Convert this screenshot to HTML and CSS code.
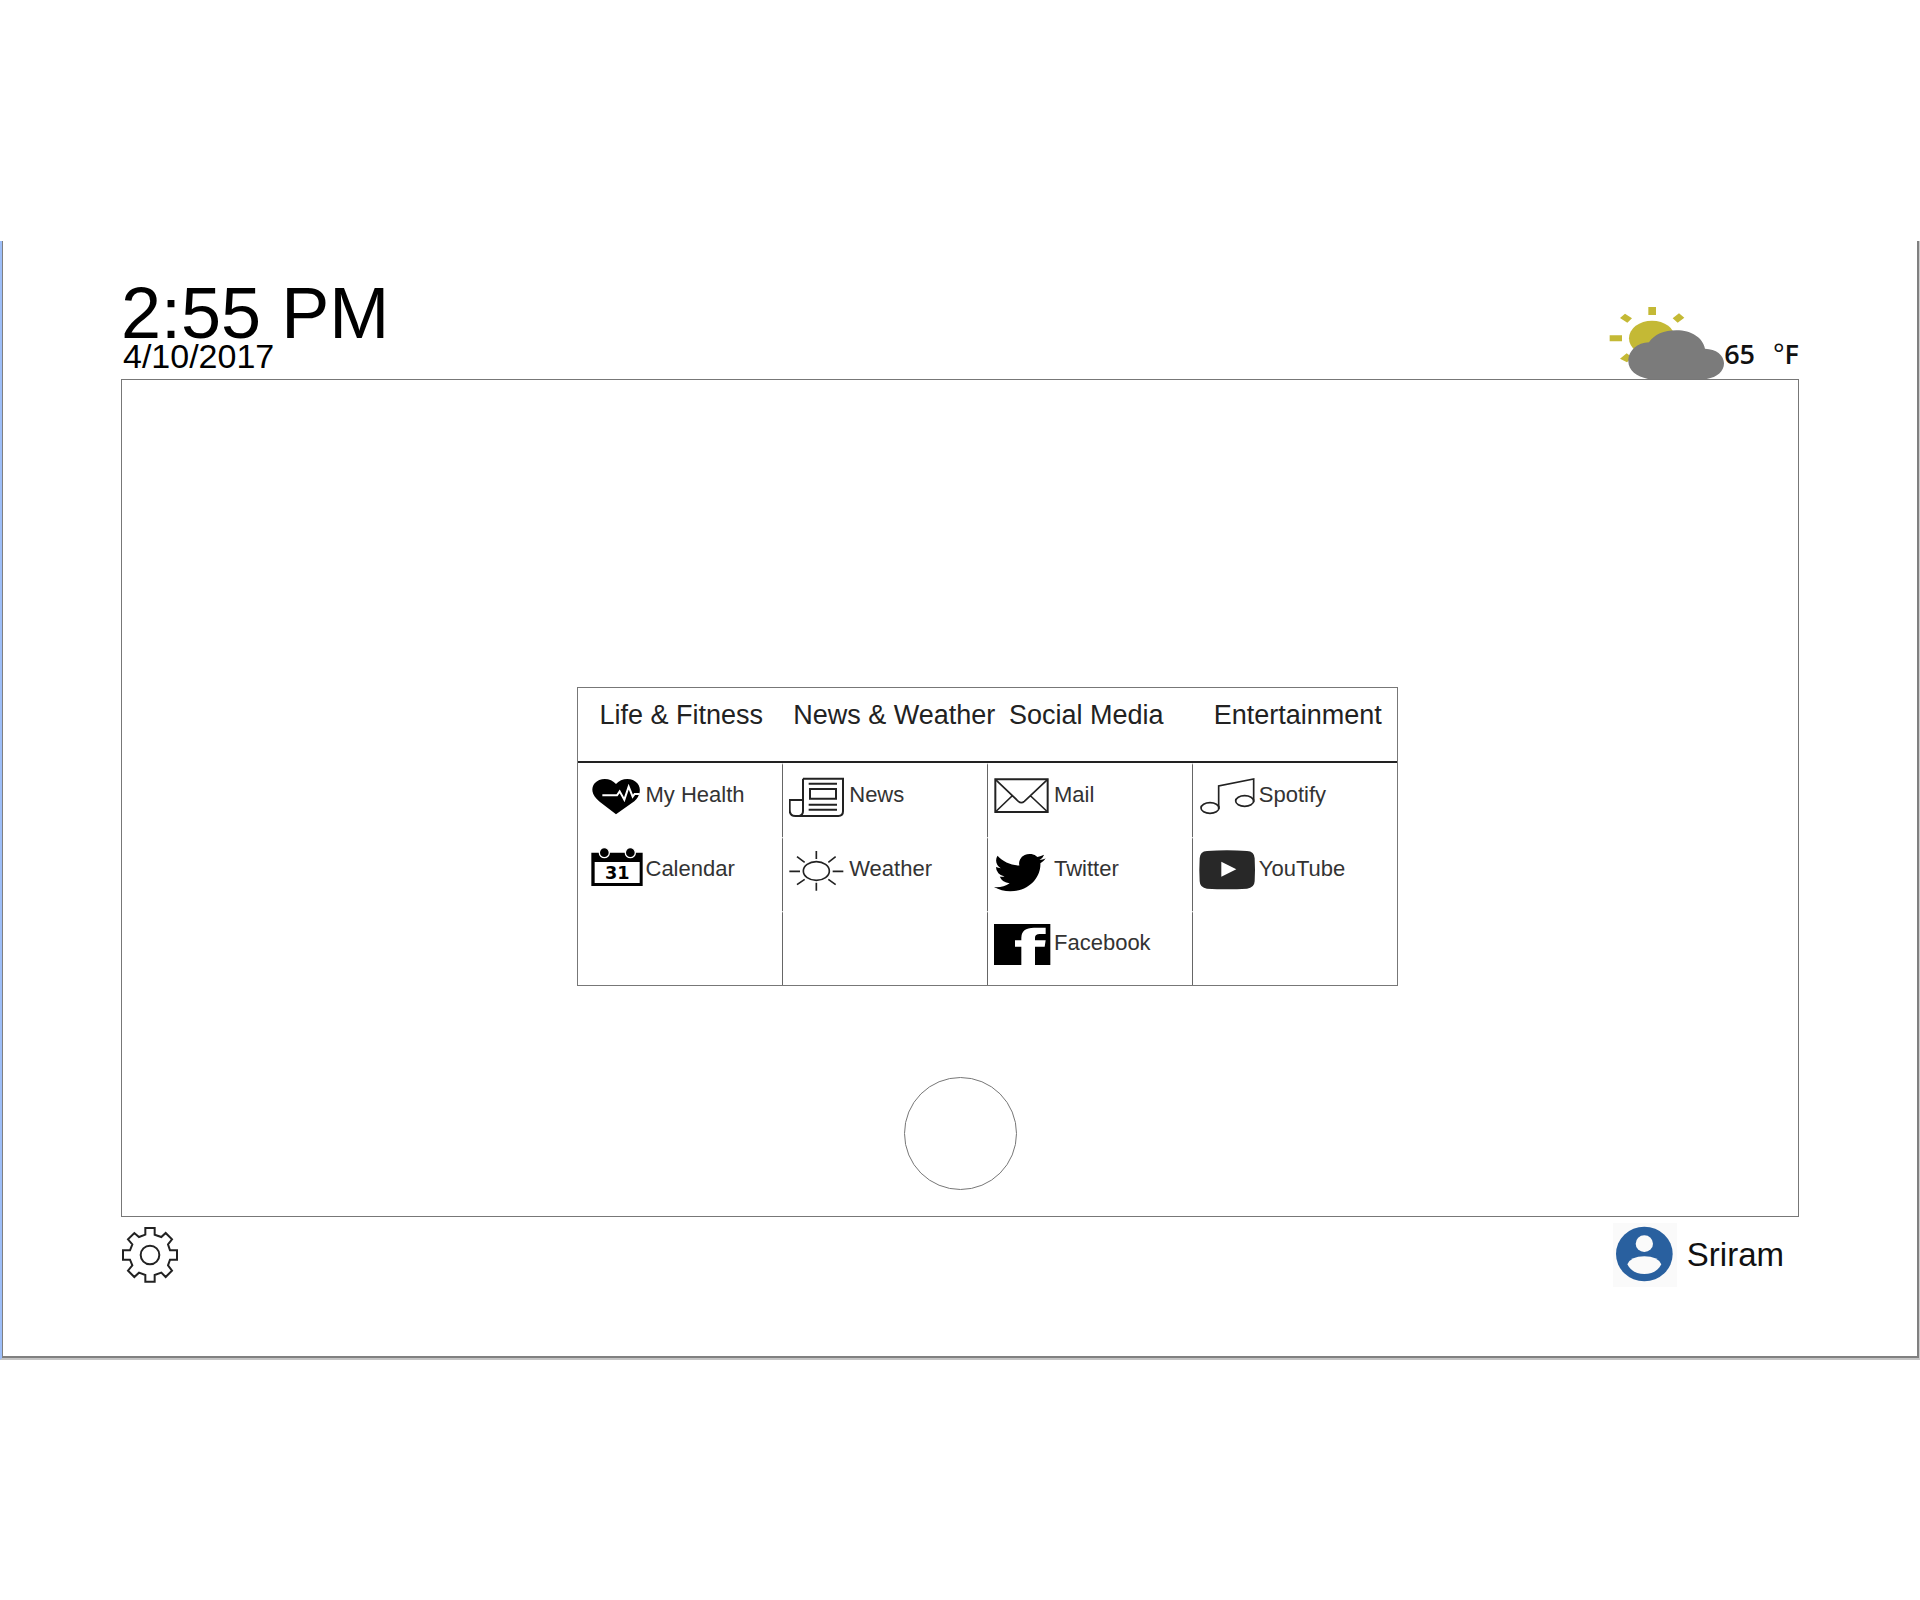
FILE: index.html
```html
<!DOCTYPE html>
<html lang="en">
<head>
<meta charset="utf-8">
<meta name="viewport" content="width=device-width, initial-scale=1">
<title>Home</title>
<link rel="stylesheet" href="styles.css">
</head>
<body>
<div class="frame">
  <div class="screen">
    <header class="topbar">
      <div class="datetime">
        <time class="clock">2:55 PM</time>
        <time class="date" datetime="2017-04-10">4/10/2017</time>
      </div>
      <div class="forecast">
        <svg class="forecast-icon" viewBox="55 48 345 219" aria-hidden="true">
          <g fill="#c4b935">
            <ellipse cx="184" cy="145" rx="69" ry="53"/>
            <path d="M173 51h23v24h-23zM57 136h37v18H57zM88 84l15-13 21 14-14 13zM246 85l19-15 16 13-20 15zM88 206l20-16 16 12-15 15z"/>
          </g>
          <path fill="#7b7b7b" d="M172 267C138 260 113 242 113 214c0-32 27-56 62-57 15-23 45-36 82-36 46 0 80 23 86 55 33 1 57 19 57 44 0 24-20 42-52 47z"/>
        </svg>
        <div class="temperature"><span>65</span> <span><span class="degree">°</span>F</span></div>
      </div>
    </header>

    <main class="stage">
      <table class="menu">
        <thead>
          <tr>
            <th scope="col">Life &amp; Fitness</th>
            <th scope="col" class="wide">News &amp; Weather</th>
            <th scope="col">Social Media</th>
            <th scope="col">Entertainment</th>
          </tr>
        </thead>
        <tbody>
          <tr>
            <td><a class="app" href="#health">
              <svg class="app-icon" viewBox="45 9 180 180" aria-hidden="true">
                <path d="M135 145L86 107C60 87 60 65 71 52c16-19 49-17 64 2 15-19 49-21 64-2 13 15 9 38-9 54z"/>
                <path d="M94 88h44l8-12 14 25 13-39 12 30 6-8h15" fill="none" stroke="#fff" stroke-width="6"/>
              </svg>My Health</a></td>
            <td><a class="app" href="#news">
              <svg class="app-icon" viewBox="42 9 180 180" aria-hidden="true">
                <g fill="none" stroke="#222" stroke-width="6">
                  <path d="M84 38h120v98q0 14-14 14H61q-17 0-17-18v-30h40M84 38v97q0 12-10 14"/>
                  <path d="M101 53h85M101 116h85M101 131h85M105 69h78v29h-78z"/>
                </g>
              </svg>News</a></td>
            <td><a class="app" href="#mail">
              <svg class="app-icon" viewBox="45 9 180 180" aria-hidden="true">
                <g fill="none" stroke="#222" stroke-width="6">
                  <path d="M49 40h157v98H49z"/>
                  <path d="M49 40l69 66q9 8 18 0l70-66M49 138l50-48M206 138l-51-48" stroke-width="5"/>
                </g>
              </svg>Mail</a></td>
            <td><a class="app" href="#spotify">
              <svg class="app-icon" viewBox="42 9 180 180" aria-hidden="true">
                <g fill="none" stroke="#222" stroke-width="5">
                  <ellipse cx="75" cy="126" rx="27" ry="16"/>
                  <ellipse cx="179" cy="105" rx="27" ry="16"/>
                  <path d="M101 129V60l105-21v70"/>
                </g>
              </svg>Spotify</a></td>
          </tr>
          <tr>
            <td><a class="app" href="#calendar">
              <svg class="app-icon" viewBox="45 232 180 180" aria-hidden="true">
                <path d="M61 261h154v100H61z"/>
                <path fill="#fff" d="M71 289h135v63H71z"/>
                <g stroke="#fff" stroke-width="4">
                  <circle cx="100" cy="261" r="15"/>
                  <circle cx="178" cy="261" r="15"/>
                </g>
                <text class="calendar-day" x="139" y="341" text-anchor="middle">31</text>
              </svg>Calendar</a></td>
            <td><a class="app" href="#weather">
              <svg class="app-icon" viewBox="42 232 180 180" aria-hidden="true">
                <g fill="none" stroke="#222" stroke-width="5">
                  <ellipse cx="124" cy="316" rx="39" ry="28"/>
                  <path d="M124 256v24M124 351v24M43 317h32M173 317h32M66 273l23 17M182 273l-22 17M66 357l23-16M182 357l-22-16"/>
                </g>
              </svg>Weather</a></td>
            <td><a class="app" href="#twitter">
              <svg class="app-icon" viewBox="45 232 180 180" aria-hidden="true">
                <path transform="translate(45 252) scale(6.46 5.74)" d="M23.953 4.57a10 10 0 01-2.825.775 4.958 4.958 0 002.163-2.723c-.951.555-2.005.959-3.127 1.184a4.92 4.92 0 00-8.384 4.482C7.69 8.095 4.067 6.13 1.64 3.162a4.822 4.822 0 00-.666 2.475c0 1.71.87 3.213 2.188 4.096a4.904 4.904 0 01-2.228-.616v.06a4.923 4.923 0 003.946 4.827 4.996 4.996 0 01-2.212.085 4.936 4.936 0 004.604 3.417 9.867 9.867 0 01-6.102 2.105c-.39 0-.779-.023-1.17-.067a13.995 13.995 0 007.557 2.209c9.053 0 13.998-7.496 13.998-13.985 0-.21 0-.42-.015-.63A9.935 9.935 0 0024 4.59z"/>
              </svg>Twitter</a></td>
            <td><a class="app" href="#youtube">
              <svg class="app-icon" viewBox="42 232 180 180" aria-hidden="true">
                <path fill="#282828" d="M66 256Q126 252 186 256 208 257 209 278 211 312 209 347 208 367 186 369 126 372 66 369 45 367 44 347 42 312 44 278 45 257 66 256z"/>
                <path fill="#fff" d="M109 288l45 23-45 22z"/>
              </svg>YouTube</a></td>
          </tr>
          <tr>
            <td></td>
            <td></td>
            <td><a class="app" href="#facebook">
              <svg class="app-icon" viewBox="42 456 180 180" aria-hidden="true">
                <path d="M42 477h169v123H42z"/>
                <path fill="#fff" d="M124 600v-55h-19v-19h19v-8q0-30 38-30h35v19h-18q-14 0-14 11v8h32l-3 19h-29v55z"/>
              </svg>Facebook</a></td>
            <td></td>
          </tr>
        </tbody>
      </table>
      <button class="home" type="button" aria-label="Home"></button>
    </main>

    <footer class="bottombar">
      <button class="settings" type="button" aria-label="Settings">
        <svg class="gear" viewBox="66 75 168 168" aria-hidden="true">
          <g fill="none" stroke="#222" stroke-width="6">
            <path d="M136 78H164V98L184 105 197 93 216 112 204 127 210 145H231V173H210L204 190 216 206 197 225 184 212 164 219V239H136V219L117 212 103 225 84 206 97 190 90 173H69V145H90L97 127 84 112 103 93 117 105 136 98z"/>
            <circle cx="150" cy="159" r="28"/>
          </g>
        </svg>
      </button>
      <a class="user" href="#profile">
        <svg class="avatar" viewBox="66 66 192 192" aria-hidden="true">
          <ellipse cx="160" cy="159" rx="85" ry="82" fill="#29609f"/>
          <ellipse cx="160" cy="128" rx="26" ry="25" fill="#fafafa"/>
          <path fill="#fafafa" d="M109 190Q120 166 160 166T211 190Q196 219 160 219T109 190z"/>
        </svg>Sriram</a>
    </footer>
  </div>
</div>
</body>
</html>
```

FILE: styles.css
```css
* {
  box-sizing: border-box;
}

body {
  margin: 0;
  padding-top: 1px;
  min-height: 100vh;
  display: flex;
  flex-direction: column;
  justify-content: center;
  background: #fff;
  color: #111;
  font-family: "Liberation Sans", Arial, sans-serif;
}

a {
  color: inherit;
  text-decoration: none;
}

button {
  padding: 0;
  border: 0;
  background: none;
  cursor: pointer;
}

svg {
  display: block;
  flex: none;
}

.frame {
  border-left: 2px solid #9dbef8;
  border-right: 1px solid #ccc;
  border-bottom: 2px solid #c4c4c4;
}

.screen {
  padding: 0 118px;
  border: 2px solid #808080;
  border-top: 0;
  border-left-width: 1px;
  background: #fff;
}

.topbar {
  display: flex;
  justify-content: space-between;
  align-items: flex-end;
  padding-top: 46px;
}

.datetime {
  display: flex;
  flex-direction: column;
  padding-bottom: 6px;
  color: #000;
}

.clock {
  font-size: 72px;
  line-height: 52px;
}

.date {
  padding-left: 2px;
  font-size: 34px;
  line-height: 34px;
}

.forecast {
  display: flex;
  align-items: flex-end;
}

.forecast-icon {
  width: 115px;
  height: 73px;
}

.temperature {
  display: flex;
  gap: 18px;
  padding-bottom: 7px;
  font-family: "Open Sans", "Noto Sans", sans-serif;
  font-size: 27px;
  font-weight: 600;
  line-height: 36px;
}

.degree {
  font-weight: 400;
}

.stage {
  display: flex;
  flex-direction: column;
  align-items: center;
  gap: 91px;
  padding: 307px 0 26px;
  border: 1px solid #777;
}

.menu {
  width: 821px;
  margin-left: 54px;
  table-layout: fixed;
  border: 1px solid #777;
  border-collapse: separate;
  border-spacing: 0;
}

.menu th {
  padding: 13px 0 32px 22px;
  border-bottom: 2px solid #222;
  color: #222;
  font-size: 27px;
  font-weight: 400;
  line-height: 28px;
  text-align: left;
  white-space: nowrap;
}

.menu .wide {
  padding-left: 11px;
}

.menu td {
  height: 74px;
  padding: 4px 0 8px 6px;
  border-top: 2px solid #fff;
  border-left: 1px solid #666;
  vertical-align: top;
}

.menu td:first-child {
  padding-left: 8px;
  border-left: 0;
}

.app {
  display: flex;
  align-items: flex-start;
  color: #333;
  font-size: 22px;
  line-height: 52px;
}

.app-icon {
  width: 60px;
  height: 60px;
}

.calendar-day {
  font-family: "DejaVu Sans", sans-serif;
  font-size: 53px;
  font-weight: 700;
}

.home {
  width: 113px;
  height: 113px;
  border: 1px solid #777;
  border-radius: 50%;
}

.bottombar {
  display: flex;
  justify-content: space-between;
  align-items: center;
  padding: 6px 15px 69px 1px;
}

.gear {
  width: 56px;
  height: 56px;
}

.user {
  display: flex;
  align-items: center;
  gap: 10px;
  font-size: 33px;
  line-height: 64px;
}

.avatar {
  width: 64px;
  height: 64px;
  background: #fafafa;
}
```
